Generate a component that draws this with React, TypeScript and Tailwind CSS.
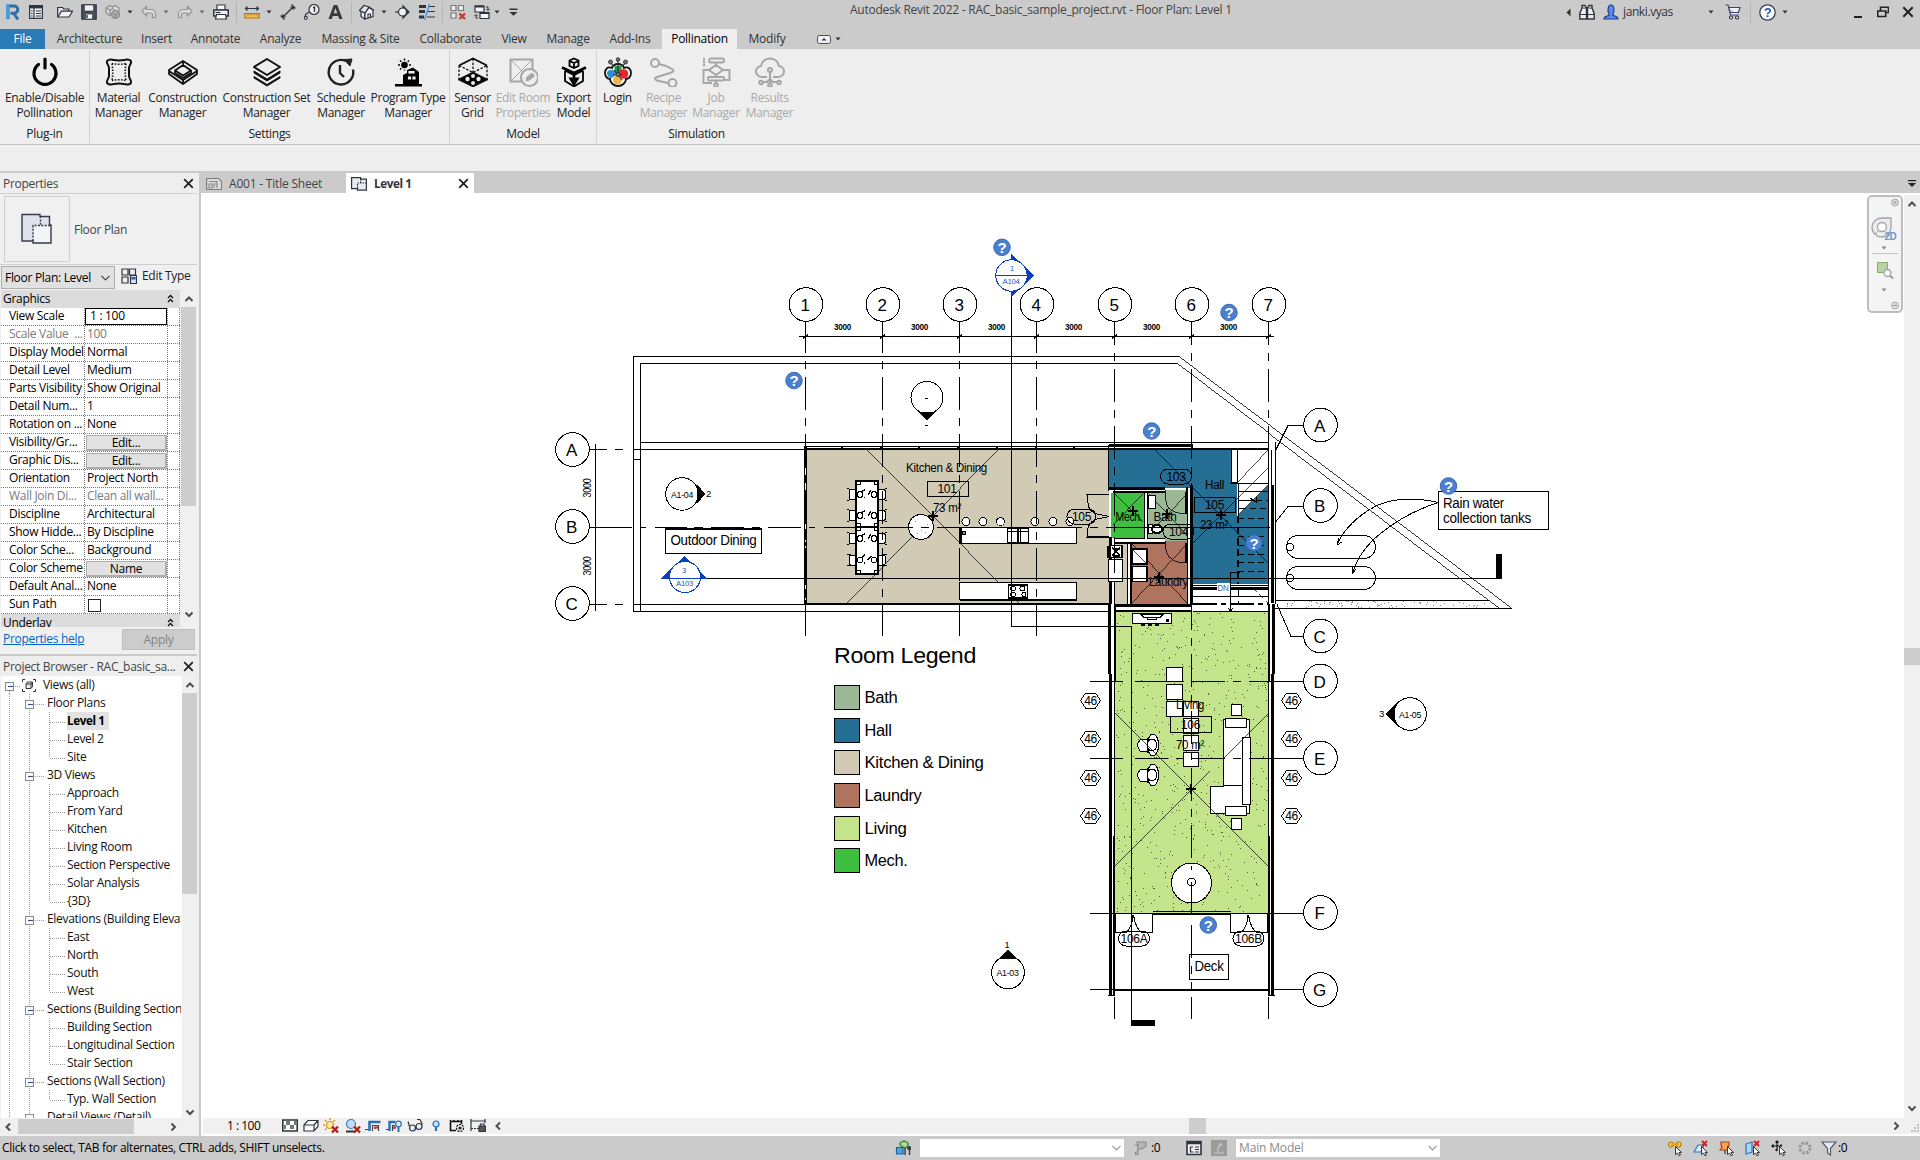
import React from "react";

const INK = "#2e3440";

/* ---------- small icon helpers ---------- */

function Icon({ children, size = 16, className = "", box = 16 }: { children?: React.ReactNode; size?: number; className?: string; box?: number }) {
  return (
    <svg width={size} height={size} viewBox={`0 0 ${box} ${box}`} fill="none" stroke={INK} strokeWidth="1.2" className={`shrink-0 ${className}`}>
      {children}
    </svg>
  );
}

function Caret({ className = "" }: { className?: string }) {
  return (
    <svg width="6" height="4" viewBox="0 0 6 4" className={`shrink-0 ${className}`}>
      <path d="M0.5 0.5h5L3 3.6z" fill="#333" />
    </svg>
  );
}

function Chevron({ dir, className = "" }: { dir: "up" | "down" | "left" | "right"; className?: string }) {
  const d = { up: "M1.5 7 5 3.5 8.5 7", down: "M1.5 3.5 5 7 8.5 3.5", left: "M7 1.5 3.5 5 7 8.5", right: "M3.5 1.5 7 5 3.5 8.5" }[dir];
  return (
    <svg width="10" height="10" viewBox="0 0 10 10" className={`shrink-0 ${className}`}>
      <path d={d} fill="none" stroke="#4d4d4d" strokeWidth="2" />
    </svg>
  );
}

function Cross({ size = 11, className = "" }: { size?: number; className?: string }) {
  return (
    <svg width={size} height={size} viewBox="0 0 11 11" className={`shrink-0 ${className}`}>
      <path d="M1.2 1.2l8.6 8.6M9.8 1.2l-8.6 8.6" stroke="#222" strokeWidth="1.8" />
    </svg>
  );
}

const Divider = ({ className = "" }: { className?: string }) => <div className={`h-[21px] w-px shrink-0 bg-[#b4b4b4] ${className}`} />;

const PlanIcon = ({ className = "" }: { className?: string }) => (
  <Icon className={className}>
    <path d="M0.6 1.6h9v1.5h5.8v11H6.5v-1.500H0.600z" fill="#e8ebf0" />
    <path d="M6.500 12V7h8.500M9.600 3v4" strokeDasharray="1.500 1" />
  </Icon>
);

/* ---------- title bar ---------- */

function QuickAccess() {
  return (
    <div className="flex h-full items-center pb-[5px]">
      <Icon className="ml-[5px]">
        <path d="M3 15V2h6.2a3.600 3.600 0 0 1 0 7.200H5.500M8.500 9l4.500 6.500" stroke="#2f6ea6" strokeWidth="3" />
        <path d="M1 0.500h3.500v14H1z" fill="#4b9cd6" stroke="none" />
      </Icon>
      <Icon className="ml-[7px]">
        <path d="M1.600 1.600h12.800v12.800H1.600z" fill="#eef0f3" />
        <path d="M1.600 3.200h12.800" strokeWidth="2.400" />
        <path d="M6 4v10M3 7h1.600M3 9.500h1.600M3 12h1.600M8 7h5M8 9.500h5M8 12h5" />
      </Icon>
      <Icon className="ml-[13px]">
        <path d="M0.700 13V3.500h5l1 1.500h5v2" fill="#dfe2e6" />
        <path d="M0.900 13 4.500 7.200h11L12 13z" fill="#f2f3f5" />
      </Icon>
      <Icon className="ml-2">
        <path d="M0.800 0.800h14.400v14.400H0.800z" fill="#4a5160" />
        <path d="M3.500 1h9v6h-9z" fill="#eef0f3" strokeWidth="0.600" />
        <path d="M4.500 10h7v5h-7z" fill="#f5f6f7" strokeWidth="0.600" />
        <path d="M6 11v3" strokeWidth="1.500" />
      </Icon>
      <Icon className="ml-2">
        <g stroke="#8d8d8d" fill="#d8d8d8">
          <path d="M1 4l4-2.500 4 2.500v5L5 11.500 1 9z" />
          <path d="M1 4l4 2 4-2M5 6v5" />
          <path d="M7 3.500l3-2 4 2.500v4" />
          <circle cx="10.500" cy="10.500" r="4" fill="#aaa" />
          <path d="M8 9l3 1.500 2-2M10.500 10.500V14" />
        </g>
      </Icon>
      <Caret className="ml-1.5" />
      <Icon className="ml-2">
        <path d="M1 7 5.500 2.500v3H10a4.500 4.500 0 0 1 4.500 4.500v3.500h-3V10.500A1.500 1.500 0 0 0 10 9H5.500v3z" stroke="#949494" fill="#dcdcdc" />
      </Icon>
      <Caret className="ml-1.5 opacity-60" />
      <Icon className="ml-2">
        <path d="M15 7l-4.500-4.500v3H6A4.500 4.500 0 0 0 1.500 10v3.500h3V10.500A1.500 1.500 0 0 1 6 9h4.500v3z" stroke="#949494" fill="#dcdcdc" />
      </Icon>
      <Caret className="ml-1.5 opacity-60" />
      <Icon className="ml-2">
        <path d="M4 1h8v5H4z" fill="#fff" />
        <path d="M0.800 6h14.400v6H0.800z" fill="#f0f2f5" strokeWidth="1.500" />
        <path d="M3.500 10.500h9l1 4.500h-11z" fill="#fff" />
        <path d="M2.500 8.500h5" />
      </Icon>
      <Divider className="ml-[7px]" />
      <Icon className="ml-[7px]">
        <path d="M1 4.500h14M3.500 2.500l-2 2 2 2M12.500 2.500l2 2-2 2" />
        <path d="M0.800 9.500h14.400v4.500H0.800z" fill="#f0bd52" stroke="#b27a10" />
        <path d="M4 9.500v2M7 9.500v2M10 9.500v2M13 9.500v2" stroke="#8a5c07" strokeWidth="0.800" />
      </Icon>
      <Caret className="ml-1.5" />
      <Icon className="ml-2">
        <path d="M4 12 12 4" strokeWidth="1.400" />
        <path d="M10.500 3h2.800v2.800M2.700 10.200V13h2.800" fill={INK} />
        <path d="M11.500 0.500l4 4M0.500 11.500l4 4" strokeWidth="1.200" />
      </Icon>
      <Icon className="ml-2">
        <path d="M1.500 13v-2.500L6 7.500" />
        <circle cx="10" cy="5.500" r="5" fill="#eee" />
        <path d="M9 4l1.500-1v5" strokeWidth="1.300" />
        <circle cx="1.800" cy="13.800" r="1.500" fill="#fff" />
      </Icon>
      <Icon className="ml-2">
        <path d="M0.500 15 5.700 1h3.600l5.200 14h-3.300l-1-3H4.800l-1 3zM5.700 9.300h3.600L7.500 4z" fill="#3a3a3a" stroke="none" />
      </Icon>
      <Divider className="ml-[7px]" />
      <Icon className="ml-[7px]">
        <path d="M2 6.500 6 9v6l-4-2.500z" fill="#e8ebef" />
        <path d="M6 9l4-5.500L14 6v6.500L6 15z" fill="#f4f5f7" />
        <path d="M0.500 6.500 5 1.500l5 1.500-4 6z" fill="#dfe2e8" />
        <path d="M10 3l5 3.500M9 14v-4h2.500v3.300" />
      </Icon>
      <Caret className="ml-1.5" />
      <Icon className="ml-2">
        <path d="M8 1.500v13M8 2l6 6-6 6z" fill={INK} />
        <circle cx="7.500" cy="8" r="4" fill="#f0f0f0" />
        <path d="M0 8h3.500" />
      </Icon>
      <Icon className="ml-2">
        <path d="M0 2.500h7M0 7.500h6M0 13h5" strokeWidth="3" />
        <path d="M10 2.500h6M9 7.500h7M8 13h8" />
        <path d="M10.500 0 5.500 16" stroke="#2f96ee" strokeWidth="1.300" />
      </Icon>
      <Divider className="ml-[7px]" />
      <Icon className="ml-[7px]">
        <path d="M1 1.500h5v5H1zM8.500 1.500h5v5h-5zM1 9h5v5H1z" fill="#eee" stroke="#777" />
        <path d="M9.500 9.500l5.500 5.500M15 9.500L9.500 15" stroke="#d5312a" strokeWidth="2.200" />
      </Icon>
      <Icon className="ml-2">
        <path d="M1 2h9v6H1zM6 8.500h9v6H6z" fill="#f2f3f5" />
        <path d="M1 2.500h9M6 9h9" strokeWidth="2" />
        <path d="M12 3h2v3M12.500 5 14 6.500 15.500 5M4 14H2v-3M0.500 12 2 10.500 3.500 12" strokeWidth="1" />
      </Icon>
      <Caret className="ml-1" />
      <svg width="9" height="8" viewBox="0 0 9 8" className="ml-[9px] shrink-0">
        <path d="M0.500 0.500h8v1.500h-8zM0.500 4h8l-4 3.800z" fill="#333" />
      </svg>
    </div>
  );
}

function TitleBar() {
  return (
    <div className="flex h-[29px] bg-[#cbcbcb]">
      <div className="w-[850px] shrink-0">
        <QuickAccess />
      </div>
      <div className="w-[718px] shrink-0 pt-[1px] text-[12px] leading-[18px] tracking-[-0.250px] text-[#444]">
        Autodesk Revit 2022 - RAC_basic_sample_project.rvt - Floor Plan: Level 1
      </div>
      <div className="flex flex-1 items-center pb-[5px]">
        <svg width="5" height="9" viewBox="0 0 5 9" className="-ml-[2px]">
          <path d="M4.500 0.500v8L0.500 4.500z" fill="#333" />
        </svg>
        <Icon className="ml-2">
          <path d="M0.800 15V9.500L3 4V1.500h3L7.500 4v11h-6zM15.200 15V9.500L13 4V1.500h-3L8.500 4v11h6z" fill="#efefef" strokeWidth="1.400" />
          <path d="M1 10.500h6M9 10.500h6M7 6h2M3 4h4M9 4h4" />
        </Icon>
        <Icon className="ml-2">
          <path d="M1 15c0-2.500 3-3 5-3.500v-2C4.500 8 4.500 1 8 1s3.500 7 2 8.500v2c2 .5 5 1 5 3.500z" fill="#5b8def" stroke="#1d3c8c" />
        </Icon>
        <span className="ml-1 w-[86px] text-[12px] leading-4 tracking-[-0.400px] text-[#333]">janki.vyas</span>
        <Caret className="ml-[-1px]" />
        <Icon className="ml-[11px]">
          <path d="M0.500 1h2.500l2.500 10h8M3.500 3.500h11.500L13.500 8.500H5" stroke="#34456e" fill="#f3f4f7" />
          <circle cx="6" cy="13.500" r="1.500" fill="#fff" />
          <circle cx="12" cy="13.500" r="1.500" fill="#fff" />
        </Icon>
        <Divider className="ml-[9px]" />
        <svg width="17" height="17" viewBox="0 0 17 17" className="ml-[8px] shrink-0">
          <circle cx="8.500" cy="8.500" r="7.700" fill="#fff" stroke="#333d55" strokeWidth="1.300" />
          <text x="8.500" y="13" textAnchor="middle" fontSize="13" fontWeight="bold" fill="#1f55c0" className="font-['Liberation_Sans',sans-serif]">?</text>
        </svg>
        <Caret className="ml-[6px]" />
        <div className="mt-[9px] ml-[66px] h-[2px] w-[8px] bg-[#222]" />
        <svg width="12" height="12" viewBox="0 0 12 12" className="ml-[15px]">
          <path d="M3.500 4.500V1.200h8v5.300H8.500M0.700 5h8v5.500h-8z" fill="none" stroke="#222" strokeWidth="1.600" />
        </svg>
        <Cross size={12} className="ml-[13px]" />
      </div>
    </div>
  );
}

/* ---------- ribbon ---------- */

const TABS: [string, string][] = [
  ["Architecture", "ml-[2px] w-[85px]"],
  ["Insert", "w-[49px]"],
  ["Annotate", "w-[69px]"],
  ["Analyze", "w-[61px]"],
  ["Massing & Site", "w-[99px]"],
  ["Collaborate", "w-[81px]"],
  ["View", "w-[46px]"],
  ["Manage", "w-[62px]"],
  ["Add-Ins", "w-[62px]"],
  ["Pollination", "ml-px w-[75px] bg-[#eeeeee] text-black"],
  ["Modify", "ml-[1px] w-[58px]"],
];

function RibbonTabs() {
  return (
    <div className="flex h-5 bg-[#cbcbcb] text-center text-[12px] leading-[20px] tracking-[-0.250px] text-[#333]">
      <div className="w-[45px] bg-[#2a7ab5] text-white">File</div>
      {TABS.map(([name, cls]) => (
        <div key={name} className={`shrink-0 whitespace-nowrap ${cls}`}>{name}</div>
      ))}
      <div className="flex items-center pl-[21px]">
        <svg width="14" height="9" viewBox="0 0 14 9">
          <rect x="0.500" y="0.500" width="13" height="8" rx="2" fill="#f1f1f1" stroke="#444c5e" />
          <path d="M4.500 5.500 7 3l2.500 2.500z" fill="#333" />
        </svg>
        <Caret className="ml-[4px]" />
      </div>
    </div>
  );
}

const GREY = "#a6a6a6";

const ribbonArt: Record<string, React.ReactNode> = {
  power: (
    <g stroke="#000" strokeWidth="3.200" strokeLinecap="round">
      <path d="M8.500 7.500a11 11 0 1 0 13 0" />
      <path d="M15 2v9" />
    </g>
  ),
  material: (
    <g stroke="#111" strokeWidth="2">
      <path d="M3 4c3-3 5-1 7-1 3 .5 7 .5 10 0 2 0 4-2 7 1 1 3-2 4-2 7v8c0 3 3 4 2 7-3 3-5 1-7 1-3-.5-7-.5-10 0-2 0-4 2-7-1-1-3 2-4 2-7v-8c0-3-3-4-2-7z" />
      <path d="M8 6.500c4 1 10 1 14 0M8 23.500c4-1 10-1 14 0M8 6.500c1 6 1 11 0 17M22 6.500c-1 6-1 11 0 17" strokeDasharray="1.500 1.500" strokeWidth="1.600" />
    </g>
  ),
  construction: (
    <g stroke="#111" strokeWidth="1.800" strokeLinejoin="round">
      <path d="M15 4 29 13v4L15 27 1 17v-4zM1 14l14 9 14-9" />
      <path d="M15 8 23 13.500 15 18.500 7 13.500zM7 13.500v2.500l8 5 8-5v-2.500M15 4v4M15 23v4" />
    </g>
  ),
  set: (
    <g stroke="#111" strokeWidth="2">
      <path d="M15 2 28 10 15 18 2 10z" strokeLinejoin="round" />
      <path d="M2 14l13 8 13-8v2l-13 8-13-8zM2 19.500l13 8 13-8v1.500L15 29 2 21z" fill="#111" strokeWidth="1" />
    </g>
  ),
  schedule: (
    <g stroke="#222" strokeWidth="2.400">
      <path d="M20 4a12.300 12.300 0 1 0 7 8.500" />
      <path d="M14 8v8l4 4" />
      <path d="M18 2.500l8-.5-2 7z" fill="#222" strokeWidth="1" />
    </g>
  ),
  program: (
    <g>
      <path d="M2 27h27v2.500H2zM10 27V18l4-2V13l6-2.500 6 4.500v12z" fill="#000" stroke="none" />
      <path d="M16 16.500v-2h5v2M15.500 20h2v2h-2zM20 20h2v2h-2z" fill="#eee" stroke="#eee" />
      <circle cx="11.500" cy="8" r="3.300" fill="#000" stroke="none" />
      <path d="M11.500 1.500v2M11.500 12.500v1M5 8h2M16 8h2M7 3.500l1.300 1.300M16 3.500l-1.300 1.300M7 12.500l1.300-1.300" stroke="#000" strokeWidth="1.500" />
    </g>
  ),
  sensor: (
    <g stroke="#111" strokeWidth="1.600">
      <path d="M15 1.500 29 8.500v14L15 29 1 22.500v-14zM15 16V2M1 8.500l14 7 14-7" strokeDasharray="2.500 1.500" strokeWidth="1.300" />
      <path d="M1 8.500l14-7 14 7" />
      <path d="M15 15.500 29 22.500 15 29.500 1 22.500z" fill="#000" />
      <g fill="#eee" stroke="none">
        <circle cx="15" cy="19" r="2" /><circle cx="9.500" cy="22" r="2.200" /><circle cx="20.500" cy="22" r="2.200" /><circle cx="15" cy="26" r="2" />
      </g>
    </g>
  ),
  room: (
    <g stroke={GREY} strokeWidth="2">
      <path d="M2.500 2.500h22v22h-22z" />
      <path d="M3 3l21 21M24 3 3 24" strokeWidth="1" />
      <circle cx="21.500" cy="20.500" r="8.500" fill="#eee" />
      <path d="M18 24l1-4 5-4 2.500 3-5 4z" fill={GREY} strokeWidth="1" />
    </g>
  ),
  exportModel: (
    <g stroke="#000" strokeWidth="1.800">
      <path d="M15 1.500l4.500 2v5.500L15 11l-4.500-2V3.500zM10.500 4l4.500 2 4.500-2M15 6v5" />
      <path d="M6 14v10l9 5.500L24 24V14" />
      <path d="M3 10.500l12 5.500 12-5.500M6 13l9 4.500V22M24 13l-9 4.500" strokeWidth="2.600" />
      <path d="M11 21.500h8L15 28z" fill="#000" />
    </g>
  ),
  login: (
    <g strokeWidth="1.800" stroke="#111">
      <path d="M9 11c-4-2-7 1-7 5s3 6 5 6c0 4 4 7 8 7s8-3 8-7c2 0 5-2 5-6s-3-7-7-5c0-2-3-4-6-4s-6 2-6 4z" fill="#fff" />
      <path d="M11.500 9h7v8h-7z" fill="#1a9a50" stroke="none" />
      <path d="M12 14v4l-3 3c-3 0-5-2-5-5s4-4 8-2z" fill="#2b8fd6" stroke="none" />
      <circle cx="20.500" cy="17" r="4.800" fill="#e8262b" stroke="none" />
      <circle cx="14.500" cy="23" r="4.500" fill="#f3b248" stroke="none" />
      <path d="M15 2v16M8 6l3 4M22 6l-3 4M10 18h9M15 18l-4-5M15 18l4 5" stroke="#333" strokeWidth="1.200" />
      <g fill="#777" stroke="#222" strokeWidth="0.800"><circle cx="7.500" cy="5" r="2" /><circle cx="22.500" cy="5" r="2" /><circle cx="15" cy="2.500" r="1.800" /><circle cx="15" cy="17.500" r="2" /></g>
    </g>
  ),
  recipe: (
    <g stroke={GREY} strokeWidth="2">
      <circle cx="6" cy="6" r="4" />
      <path d="M10 7c6 1 10 3 13 5s1 3-2 4L8 20c-3 1-2 3 0 3.500L19 26" />
      <circle cx="23.500" cy="26" r="4" />
    </g>
  ),
  job: (
    <g stroke={GREY} strokeWidth="1.900">
      <rect x="8" y="1.500" width="15" height="4" rx="2" />
      <path d="M15 6v2M15 8l7 5-7 5-7-5zM8 13H2.500v13H11M22 13h6.500v10H24M15 18v2" />
      <rect x="7" y="20" width="16" height="3.500" rx="1" />
      <path d="M15 23.500v3" /><circle cx="15" cy="28" r="1.800" />
      <path d="M2 2h2M2 5h2M2 8h2" strokeWidth="2.500" />
    </g>
  ),
  results: (
    <g stroke={GREY} strokeWidth="2">
      <path d="M12 20H7C3 20 1 17 1 14.500S3 9.500 6 9c1-5 5-7.500 9-7.500S23 4 24 9c3 .5 5 3 5 5.500S27 20 23 20h-5" />
      <circle cx="15" cy="13" r="2" />
      <path d="M15 15v11M7 25h5l3-3 3 3h5" />
      <circle cx="6" cy="25.500" r="1.800" /><circle cx="24" cy="25.500" r="1.800" /><circle cx="15" cy="28" r="1.800" />
    </g>
  ),
};

type Cmd = { art: string; lines: string[]; w: string; off?: boolean };
const GROUPS: { title: string; items: Cmd[] }[] = [
  { title: "Plug-in", items: [{ art: "power", lines: ["Enable/Disable", "Pollination"], w: "w-[89px]" }] },
  {
    title: "Settings",
    items: [
      { art: "material", lines: ["Material", "Manager"], w: "w-[57px]" },
      { art: "construction", lines: ["Construction", "Manager"], w: "w-[71px]" },
      { art: "set", lines: ["Construction Set", "Manager"], w: "w-[97px]" },
      { art: "schedule", lines: ["Schedule", "Manager"], w: "w-[52px]" },
      { art: "program", lines: ["Program Type", "Manager"], w: "w-[82px]" },
    ],
  },
  {
    title: "Model",
    items: [
      { art: "sensor", lines: ["Sensor", "Grid"], w: "w-[45px]" },
      { art: "room", lines: ["Edit Room", "Properties"], w: "w-[56px]", off: true },
      { art: "exportModel", lines: ["Export", "Model"], w: "w-[45px]" },
    ],
  },
  {
    title: "Simulation",
    items: [
      { art: "login", lines: ["Login", ""], w: "w-[41px]" },
      { art: "recipe", lines: ["Recipe", "Manager"], w: "w-[51px]", off: true },
      { art: "job", lines: ["Job", "Manager"], w: "w-[54px]", off: true },
      { art: "results", lines: ["Results", "Manager"], w: "w-[53px]", off: true },
    ],
  },
];

function Ribbon() {
  return (
    <div className="flex h-[96px] border-b border-[#c2c2c2] bg-[#eeeeee] text-[12px] tracking-[-0.300px] text-[#222]">
      {GROUPS.map((g, gi) => (
        <div key={g.title} className="flex">
          <div>
            <div className="flex pt-2">
              {g.items.map((c) => (
                <div key={c.art} className={`flex shrink-0 flex-col items-center leading-[15px] whitespace-nowrap ${c.w} ${c.off ? "text-[#a9a9a9]" : ""}`}>
                  <Icon size={30} box={30} className="mb-[3px]">{ribbonArt[c.art]}</Icon>
                  {c.lines.map((l, i) => <span key={i} className="h-[15px]">{l}</span>)}
                </div>
              ))}
            </div>
            <div className="pt-[6px] text-center leading-4">{g.title}</div>
          </div>
          {gi < 3 && <div className="mt-px h-[93px] w-px bg-[#d2d2d2]" />}
        </div>
      ))}
    </div>
  );
}

/* ---------- properties palette ---------- */

type Prop = { k: string; v: string; kind?: "input" | "btn" | "check"; off?: boolean };
const PROPS: Prop[] = [
  { k: "View Scale", v: "1 : 100", kind: "input" },
  { k: "Scale Value  ...", v: "100", off: true },
  { k: "Display Model", v: "Normal" },
  { k: "Detail Level", v: "Medium" },
  { k: "Parts Visibility", v: "Show Original" },
  { k: "Detail Num...", v: "1" },
  { k: "Rotation on ...", v: "None" },
  { k: "Visibility/Gr...", v: "Edit...", kind: "btn" },
  { k: "Graphic Dis...", v: "Edit...", kind: "btn" },
  { k: "Orientation", v: "Project North" },
  { k: "Wall Join Di...", v: "Clean all wall...", off: true },
  { k: "Discipline", v: "Architectural" },
  { k: "Show Hidde...", v: "By Discipline" },
  { k: "Color Sche...", v: "Background" },
  { k: "Color Scheme", v: "Name", kind: "btn" },
  { k: "Default Anal...", v: "None" },
  { k: "Sun Path", v: "", kind: "check" },
];

function GroupHead({ name, className = "" }: { name: string; className?: string }) {
  return (
    <div className={`flex justify-between overflow-hidden bg-[#dcdcdc] pr-[6px] pl-[2px] leading-[17px] ${className}`}>
      <span>{name}</span>
      <svg width="7" height="9" viewBox="0 0 7 9" className="mt-[4px] shrink-0">
        <path d="M1 4 3.500 1.500 6 4M1 8 3.500 5.500 6 8" fill="none" stroke="#111" strokeWidth="1.300" />
      </svg>
    </div>
  );
}

function PropertyRow({ p }: { p: Prop }) {
  return (
    <div className={`flex h-[18px] border-b border-dotted border-[#777] whitespace-pre ${p.off ? "text-[#7a7a7a]" : "text-black"}`}>
      <div className="w-[83px] shrink-0 overflow-hidden pl-2 leading-4">{p.k}</div>
      <div className="w-[83px] shrink-0 overflow-hidden border-l border-dotted border-[#777]">
        {p.kind === "input" && <div className="h-[17px] border border-black pl-1 leading-[14px]">{p.v}</div>}
        {p.kind === "btn" && <div className="mt-px ml-[1px] h-4 border border-r-2 border-b-2 border-[#adadad] bg-[#e1e1e1] text-center leading-[14px]">{p.v}</div>}
        {p.kind === "check" && <div className="mt-[3px] ml-[3px] h-[13px] w-[13px] border border-[#222] bg-white" />}
        {!p.kind && <div className="pl-[2px] leading-4">{p.v}</div>}
      </div>
      <div className="w-[12px] border-l border-dotted border-[#777]" />
      <div className="w-px border-l border-dotted border-[#777]" />
    </div>
  );
}

function Properties() {
  return (
    <div className="h-[481px] bg-[#f0f0f0]">
      <div className="flex h-5 items-center justify-between bg-[#eeeeee] pt-px pr-[3px] pl-[3px] text-[#444]">
        <span>Properties</span>
        <Cross />
      </div>
      <div className="flex h-[72px] items-center border-y border-[#cfcfcf] pl-1">
        <div className="flex h-[66px] w-[66px] items-center justify-center border border-[#cfcfcf]">
          <svg width="32" height="32" viewBox="0 0 32 32">
            <path d="M1 1.500h18v2h9.500v8.500H30v18H12v-2H1z" fill="#dfe2ea" stroke="#363c49" strokeWidth="1.400" />
            <path d="M13 13h16v16H13z" fill="#f3f4f7" />
            <path d="M12 28V12.500h17M19.500 3v9" fill="none" stroke="#363c49" strokeWidth="1.400" strokeDasharray="2 1.400" />
          </svg>
        </div>
        <span className="ml-1 pt-[2px] text-[#444]">Floor Plan</span>
      </div>
      <div className="flex h-[25px] pt-px pl-px">
        <div className="flex h-[23px] w-[114px] items-center justify-between border border-[#adadad] bg-[#e1e1e1] pr-1 pl-[3px]">
          <span className="text-black">Floor Plan: Level</span>
          <svg width="9" height="6" viewBox="0 0 9 6"><path d="M0.500 0.800 4.500 4.800 8.500 0.800" fill="none" stroke="#444" strokeWidth="1.200" /></svg>
        </div>
        <Icon className="mt-[2px] ml-[6px]">
          <path d="M1 1h6v6H1zM8.500 1h6v6h-6zM1 9h6v6H1z" fill="#eceef2" />
          <path d="M9.500 7.500h6v8h-6z" fill="#dde6f5" />
          <path d="M11 9.500h3v1.500h-3z" fill="#2463b5" stroke="#2463b5" />
        </Icon>
        <span className="ml-[5px] leading-[19px] text-[#222]">Edit Type</span>
      </div>
      <div className="flex h-[337px] pl-px">
        <div className="w-[179px] overflow-hidden bg-white">
          <GroupHead name="Graphics" className="h-[18px]" />
          {PROPS.map((p) => <PropertyRow key={p.k} p={p} />)}
          <GroupHead name="Underlay" className="h-[13px]" />
        </div>
        <div className="ml-px flex w-[15px] flex-col items-center justify-between bg-[#f0f0f0] pb-[8px]">
          <div className="flex h-[17px] items-center"><Chevron dir="up" /></div>
          <div className="-mt-[104px] h-[199px] w-full bg-[#cdcdcd]" />
          <Chevron dir="down" />
        </div>
      </div>
      <div className="flex justify-between pt-[2px] pr-[2px] pl-[3px]">
        <span className="leading-[19px] text-[#0066cc] underline">Properties help</span>
        <div className="h-[21px] w-[73px] border border-[#bfbfbf] bg-[#cccccc] text-center leading-[19px] text-[#838383]">Apply</div>
      </div>
    </div>
  );
}

/* ---------- project browser ---------- */

const TREE: { t: string; d: 0 | 1 | 2; last?: boolean }[] = [
  { t: "Views (all)", d: 0 },
  { t: "Floor Plans", d: 1 },
  { t: "Level 1", d: 2 },
  { t: "Level 2", d: 2 },
  { t: "Site", d: 2, last: true },
  { t: "3D Views", d: 1 },
  { t: "Approach", d: 2 },
  { t: "From Yard", d: 2 },
  { t: "Kitchen", d: 2 },
  { t: "Living Room", d: 2 },
  { t: "Section Perspective", d: 2 },
  { t: "Solar Analysis", d: 2 },
  { t: "{3D}", d: 2, last: true },
  { t: "Elevations (Building Elevation)", d: 1 },
  { t: "East", d: 2 },
  { t: "North", d: 2 },
  { t: "South", d: 2 },
  { t: "West", d: 2, last: true },
  { t: "Sections (Building Section)", d: 1 },
  { t: "Building Section", d: 2 },
  { t: "Longitudinal Section", d: 2 },
  { t: "Stair Section", d: 2, last: true },
  { t: "Sections (Wall Section)", d: 1 },
  { t: "Typ. Wall Section", d: 2, last: true },
  { t: "Detail Views (Detail)", d: 1 },
];

function TreeLines({ d, first, last }: { d: 0 | 1 | 2; first: boolean; last?: boolean }) {
  const w = [42, 46, 66][d];
  const box = (x: number) => (
    <g>
      <rect x={x - 4} y="6.500" width="8" height="8" rx="1" fill="#fafafa" stroke="#8a8a8a" />
      <path d={`M${x - 2} 10.500h5`} stroke="#2d4a9a" />
    </g>
  );
  return (
    <svg width={w} height="18" viewBox={`0 0 ${w} 18`} className="shrink-0" fill="none" shapeRendering="crispEdges">
      <g stroke="#9a9a9a" strokeDasharray="1 1">
        {first ? <path d="M8.500 15v3" /> : <path d="M8.500 0v18" />}
        {d >= 1 && <path d="M28.500 0v18" />}
        {d === 2 && <path d={`M48.500 0v${last ? 10 : 18}`} />}
        {d === 0 && <path d="M14 10.500h6" />}
        {d === 1 && <path d="M34 10.500h10" />}
        {d === 2 && <path d="M49 10.500h15" />}
      </g>
      {d === 0 && box(8.5)}
      {d === 1 && box(28.5)}
      {d === 0 && (
        <g stroke="#333" shapeRendering="auto">
          <path d="M24 3.500h-2.500V6M32 3.500h2.500V6M24 15.500h-2.500V13M32 15.500h2.500V13" />
          <path d="M25 8l1.500-2h5v4.500L30 12.500h-5zM25 8h5v4M30 8l1.500-2" fill="#eee" />
        </g>
      )}
    </svg>
  );
}

function ProjectBrowser() {
  return (
    <div className="h-[480px] bg-[#f0f0f0]">
      <div className="flex h-5 items-center justify-between bg-[#eeeeee] pt-px pr-[3px] pl-[3px] text-[#444]">
        <span>Project Browser - RAC_basic_sa...</span>
        <Cross />
      </div>
      <div className="flex h-[443px] pl-px">
        <div className="h-[442px] w-[181px] overflow-hidden bg-white">
          {TREE.map((n, i) => (
            <div key={n.t} className="flex h-[18px] w-[180px] overflow-hidden leading-[17px] whitespace-nowrap text-[#111]">
              <TreeLines d={n.d} first={i === 0} last={n.last} />
              {i === 2 ? <span className="bg-[#e2e2e2] pr-1 text-[11.700px] font-bold tracking-[-0.400px] text-black">{n.t}</span> : <span>{n.t}</span>}
            </div>
          ))}
        </div>
        <div className="flex w-[15px] flex-col items-center bg-[#f0f0f0]">
          <div className="flex h-[17px] items-center"><Chevron dir="up" /></div>
          <div className="h-[201px] w-full bg-[#cdcdcd]" />
          <Chevron dir="down" className="mt-[213px]" />
        </div>
      </div>
      <div className="flex h-[15px] items-center pl-[3px]">
        <Chevron dir="left" />
        <div className="ml-[5px] h-full w-[116px] bg-[#cdcdcd]" />
        <Chevron dir="right" className="ml-[34px]" />
      </div>
    </div>
  );
}

/* ---------- floor plan drawing ---------- */

const ARIAL = "font-['Liberation_Sans',Arial,sans-serif]";
const DASH = "33 8 8 8";
const HAIR = 0.7;

function Label({ x, y, size, w, children, fill = "#000", anchor = "middle", rotate, bold }: { x: number; y: number; size: number; w?: number; children: string; fill?: string; anchor?: "start" | "middle"; rotate?: number; bold?: boolean }) {
  return (
    <text x={x} y={y + size * 0.36} fontSize={size} fontWeight={bold ? 700 : 400} textAnchor={anchor} fill={fill} stroke="none" textLength={w} lengthAdjust="spacingAndGlyphs" transform={rotate ? `rotate(${rotate} ${x} ${y})` : undefined} className={ARIAL}>
      {children}
    </text>
  );
}

function Bubble({ x, y, t }: { x: number; y: number; t: string }) {
  return (
    <g>
      <circle cx={x} cy={y} r="16.800" fill="#fff" />
      <Label x={x - 1} y={y + 0.5} size={17}>{t}</Label>
    </g>
  );
}

function Help({ x, y }: { x: number; y: number }) {
  return (
    <g shapeRendering="auto">
      <circle cx={x} cy={y} r="8.300" fill="#4a80cf" stroke="#2c5ba3" strokeWidth="0.800" />
      <text x={x} y={y + 5.5} fontSize="15" fontWeight="bold" fill="#fff" stroke="none" textAnchor="middle" className={ARIAL}>?</text>
    </g>
  );
}

function Plus({ x, y }: { x: number; y: number }) {
  return <path d={`M${x - 5} ${y}h10M${x} ${y - 5}v10`} strokeWidth="2" />;
}

function Pill({ x, y, w, t }: { x: number; y: number; w: number; t: string }) {
  return (
    <g>
      <rect x={x - w / 2} y={y - 7.5} width={w} height="15" rx="7.500" fill="none" />
      <Label x={x} y={y} size={12}>{t}</Label>
    </g>
  );
}

function scatter(n: number, x0: number, y0: number, w: number, h: number, seed: number) {
  let s = seed;
  const next = () => {
    s = (s * 1664525 + 1013904223) % 4294967296;
    return s / 4294967296;
  };
  return Array.from({ length: n }, () => `M${Math.floor(x0 + next() * w)} ${Math.floor(y0 + next() * h) + 0.5}h1`).join("");
}

const LIVING_DOTS = scatter(640, 1116, 613, 152, 299, 7);
const STRIP_DOTS = scatter(80, 1280, 601, 205, 7, 21);
const COLS = [805.5, 882.5, 959.5, 1036.5, 1114.5, 1191.5, 1268.5];

const LEGEND: [string, string, number, number][] = [
  ["Bath", "#9bb796", 698, 33],
  ["Hall", "#256f94", 730.5, 27],
  ["Kitchen & Dining", "#d1cab5", 763, 119],
  ["Laundry", "#ae7460", 796, 57],
  ["Living", "#c3e48b", 828.5, 42],
  ["Mech.", "#3fbf3f", 861, 43],
];

function SiteAndGrids() {
  return (
    <g>
      <path d="M633.500 611.500V356.500H1179M1512 608.500H1275M640.500 611.500V363.500H1176.500M633.500 611.500H1109M633.500 459.500h7M640.500 442.500H1268M1275 600.500H1489" />
      <path d="M1179 356.500 1512 608.500M1176.500 363.500 1499.500 608.500" strokeWidth="0.800" />
      <path d="M632.500 449.500H806M632.500 604.500H806" />
      <path d="M589.500 449.500h17M615 449.500h8M589.500 604.500h17M615 604.500h8M589.500 527.500H632" />
      <path d={STRIP_DOTS} stroke="#888" />
      <path d="M595.500 444V611M799 336.500H1274" />
    </g>
  );
}

function Kitchen() {
  return (
    <g>
      <rect x="805" y="449" width="305" height="155" fill="#d1cab5" stroke="none" />
      <path d="M805 446.500h304" />
      <path d="M805 449h304M804 604h308" strokeWidth="2" />
      <path d="M805.500 446V605" strokeWidth="3" />
      <path d="M805.500 455V600" stroke="#fff" strokeDasharray="9 4" />
      <path d="M841.500 446v3M880.500 446v3M918.500 446v3M957.500 446v3M996.500 446v3M1035.500 446v3M1073.500 446v3" strokeWidth="2" />
      <path d="M866.500 449l153.500 155M999 449 846 604" strokeWidth={HAIR} />
      {[494.5, 515.5, 538.5, 560].map((y) => (
        <g key={y} fill="#fff">
          <path d={`M856 ${y - 5}h-5l-2 1v8l2 1h5z`} />
          <path d={`M878 ${y - 5}h5l2 1v8l-2 1h-5z`} />
          <path d={`M847 ${y - 6}l4 1M847 ${y + 6}l4-1M887 ${y - 6}l-4 1M887 ${y + 6}l-4-1`} />
        </g>
      ))}
      <rect x="856" y="481" width="22" height="93" fill="#fff" strokeWidth="2" />
      <path d="M855 527h24" strokeWidth="2" />
      <path d="M857 484.500h3v-3M877 484.500h-3v-3M857 523.500h3v3M877 523.500h-3v3M857 530.500h3v-3M877 530.500h-3v-3M857 570.500h3v3M877 570.500h-3v3" />
      {[494.5, 515.5, 538.5, 560].map((y) => (
        <g key={y}>
          <circle cx="860" cy={y} r="2.800" />
          <circle cx="874" cy={y} r="2.800" />
          <path d={`M862 ${y - 3}l3-2M871 ${y - 4}l-3 4M864 ${y + 3}h1`} strokeWidth="1.500" />
        </g>
      ))}
      <circle cx="921" cy="527" r="12.500" fill="#fff" />
      <path d="M915 521.500h1M925 532.500h1M917 533.500h1M921 530.500h1M927 524.500h1" stroke="#999" />
      <Plus x={933} y={516} />
      {[966, 983, 1000.5, 1035, 1053, 1070].map((x) => <circle key={x} cx={x} cy="521.500" r="4" fill="#fff" />)}
      <rect x="959.500" y="527.500" width="117" height="16" fill="#fff" />
      <path d="M960.500 527v17" strokeWidth="2" />
      <rect x="962" y="531" width="3.500" height="3.500" fill="#888" />
      <path d="M1007.500 528.500h21v14h-21zM1018 528v15M1020.500 528v15M1008 531.500h20" strokeWidth="1.500" />
      <rect x="959.500" y="582.500" width="117" height="17" fill="#fff" />
      <path d="M960 599.500h117" strokeWidth="2" />
      <rect x="1008.500" y="585" width="19" height="13" strokeWidth="1.500" fill="#fff" />
      <g strokeWidth="1"><circle cx="1013" cy="588.500" r="2.500" /><circle cx="1022.500" cy="588.500" r="2.500" /><circle cx="1013" cy="594.500" r="2.500" /><circle cx="1024" cy="594.500" r="2" /></g>
      <rect x="927.500" y="481.500" width="41" height="15" />
      <Label x={946.5} y={468} size={12} w={81}>Kitchen &amp; Dining</Label>
      <Label x={947} y={488.5} size={12}>101</Label>
      <Label x={947} y={508} size={12} w={28}>73 m²</Label>
      <path d="M1109 494.500h-22q1 10 2 13t6 6l14 3-14 3q-4 2-6 6t-2 12h22" />
      <path d="M1087 494.500h22M1087 537h25" strokeWidth="1.800" />
      <Pill x={1081.5} y={516.5} w={29} t="105" />
    </g>
  );
}

function ServiceCore() {
  return (
    <g>
      <path d="M1109 450H1268V584H1192V488H1109z" fill="#256f94" stroke="none" />
      <rect x="1109" y="488" width="83" height="123" fill="#fff" stroke="none" />
      <rect x="1111" y="492.500" width="33" height="45" fill="#3fbf3f" stroke="none" />
      <path d="M1148 492.500h17v-3h22.500v51.500h-22.500v-3h-17z" fill="#9bb796" stroke="none" />
      <path d="M1131 544h34v-3h22.500v63H1131z" fill="#ae7460" stroke="none" />
      <rect x="1114.500" y="543.500" width="12" height="61" fill="#d1cab5" stroke="none" />
      <path d="M1109 445h82" strokeWidth="3" />
      <path d="M1109 449h160M1191.500 444v6" strokeWidth="2" />
      <path d="M1108.500 445v46" />
      <path d="M1109 488.500h56" strokeWidth="3" />
      <path d="M1113 492h52M1144.500 492v46M1147.500 492v46M1114 538.500h31M1147 538.500h18M1114 543h51" strokeWidth="1.400" />
      <path d="M1191.500 485v120M1187 487v7" strokeWidth="2.500" />
      <path d="M1187.500 494v110" />
      <path d="M1127.500 543v61M1131 543v61" strokeWidth="1.600" />
      <path d="M1110 537v75" strokeWidth="3" />
      <path d="M1114.500 537v75M1109 604.500h83" strokeWidth="1.500" />
      <path d="M1114 606h78M1114 611h78" strokeWidth="2" />
      <path d="M1115 494l28 28M1143 494l-30 31M1149 494l37 40M1187 494l-38 40M1132 544l55 59M1187 544l-55 59" strokeWidth={HAIR} />
      <path d="M1165 490q0 18 6 20 4 3 15 4V492M1165 541q0 15 7 18 4 4 14 4V543" strokeWidth="0.800" />
      <path d="M1185.500 492v22M1185.500 543v20" strokeWidth="2" />
      <rect x="1148.500" y="495.500" width="7" height="13" fill="#fff" />
      <rect x="1148.500" y="524.500" width="4" height="9" fill="#fff" />
      <ellipse cx="1157" cy="529" rx="5" ry="4" fill="#fff" strokeWidth="2" />
      <rect x="1132" y="549" width="15" height="15" fill="#fff" strokeWidth="1.500" />
      <rect x="1132" y="566.500" width="15" height="15" fill="#fff" strokeWidth="1.500" />
      <path d="M1132 549l15 15" strokeWidth={HAIR} />
      <rect x="1107" y="546" width="4" height="11" fill="#000" />
      <rect x="1110" y="545.500" width="12" height="12" fill="#fff" strokeWidth="1.500" />
      <path d="M1112 547l8 9M1120 547l-8 9M1113 556h7M1113 549h7" strokeWidth="1.300" />
      <rect x="1108.500" y="559.500" width="14" height="22" fill="#fff" />
      <Plus x={1132.5} y={511} />
      <Plus x={1167} y={514} />
      <Plus x={1158.5} y={577} />
      <Label x={1129} y={517} size={12} w={27}>Mech.</Label>
      <Label x={1165} y={517} size={12} w={23}>Bath</Label>
      <Label x={1168.5} y={581.5} size={12} w={39}>Laundry</Label>
      <Pill x={1176} y={476.5} w={31} t="103" />
      <Pill x={1178.5} y={531.5} w={31} t="104" />
      <rect x="1237" y="450" width="31" height="66" fill="#fff" stroke="none" />
      <path d="M1268 485v40h-30v-9.500z" fill="#256f94" stroke="none" />
      <rect x="1231.500" y="449.500" width="6" height="33" fill="#fff" />
      <path d="M1155 450l113 113M1193 543l75-75M1238 482l30-32M1238 515l30-30" strokeWidth={HAIR} />
      <path d="M1230 483.500h38M1238 491.500h30M1238 500.500h16M1238 508.500h8" />
      <path d="M1250 508.500h18M1238 518.500h30M1238 527.500h30M1238 536.500h30M1238 545.500h30M1238 554.500h30M1238 562.500h30M1238 571.500h30M1256 500.500h12" strokeDasharray="6 4" />
      <path d="M1238 483v33" />
      <path d="M1238 516v88" strokeDasharray="7 4" strokeWidth="1.500" />
      <path d="M1230.500 611v-39h9M1250 498l6 4v-5" />
      <rect x="1193" y="584" width="75" height="28" fill="#fff" stroke="none" />
      <path d="M1193 585.500h75M1193 596.500h75M1230.500 584v27M1228 608l2.500 3 2.500-3" />
      <path d="M1238 590v14" strokeDasharray="7 4" />
      <path d="M1193 588.500h75" strokeWidth="2.500" />
      <path d="M1193 604h75" strokeWidth="2" strokeDasharray="24 4 5 4" />
      <path d="M1253 588l15 15" strokeDasharray="5 4" strokeWidth={HAIR} />
      <rect x="1216.500" y="583" width="13" height="9" fill="#fff" stroke="none" />
      <Label x={1223} y={588} size={8.5} fill="#356a9c" w={11}>DN</Label>
      <rect x="1194.500" y="497.500" width="41" height="15" />
      <Label x={1214.5} y={484.5} size={12} w={19}>Hall</Label>
      <Label x={1214.5} y={504.5} size={12}>105</Label>
      <Label x={1214} y={524.5} size={12} w={28}>23 m²</Label>
      <Plus x={1220.5} y={515} />
      <rect x="1268" y="442" width="7.500" height="162" fill="#fff" stroke="none" />
      <path d="M1268.500 442v162M1271.500 450v36M1275.500 442v162" />
      <path d="M1272 485v118" strokeWidth="3" />
    </g>
  );
}

function Living() {
  return (
    <g>
      <rect x="1115" y="611.500" width="153.500" height="301.500" fill="#c3e48b" stroke="none" />
      <path d={LIVING_DOTS} stroke="#4c6338" />
      <path d="M1193 611.500h76" />
      <rect x="1108" y="604" width="6" height="391" fill="#fff" stroke="none" />
      <rect x="1269" y="604" width="6" height="391" fill="#fff" stroke="none" />
      <path d="M1109 604v70M1273.500 604v70" strokeWidth="3" />
      <path d="M1110.500 674v322M1272.500 674v322" strokeWidth="2.500" />
      <path d="M1114.500 604v392M1268.500 604v392M1108 995.500h7M1268 995.500h7" />
      <path d="M1113.500 836v160M1269 836v160M1114.500 604v77M1268.500 604v77" strokeWidth="2" />
      <path d="M1115 990h153" strokeWidth="2" />
      <rect x="1132.500" y="613.500" width="39" height="10" fill="#fff" strokeWidth="1.400" />
      <path d="M1141 614.500h22l-3 3h-16zM1147 617v2h9v-2" fill="#fff" />
      <path d="M1141 625h18" strokeWidth="1.500" strokeDasharray="4 3" />
      <path d="M1166 620h3" strokeWidth="3" />
      <g fill="#fff">
        <path d="M1166.500 667.500h16v14h-16zM1166.500 684.500h16v15h-16zM1166.500 701.500h16v15h-16zM1183.500 701.500h15v15h-15zM1183.500 718.500h15v15h-15zM1183.500 735.500h15v15h-15zM1183.500 752.500h15v14h-15z" />
        {[745, 775].map((y) => (
          <g key={y}>
            <path d={`M1137 ${y}l3-5 7-1v13l-7-1z`} />
            <ellipse cx="1153" cy={y} rx="5.500" ry="11" />
            <ellipse cx="1152" cy={y} rx="4.500" ry="6" />
          </g>
        ))}
        <path d="M1223.500 719.500h26v94h-39v-27h13z" />
        <path d="M1223.500 785.500h19M1242.500 737.500h8v67h-8zM1225.500 718.500h21v9h-21zM1225.500 806.500h21v9h-21zM1231.500 704.500h10v11h-10zM1231.500 818.500h10v11h-10z" />
        <circle cx="1191.500" cy="883" r="20" />
        <circle cx="1191.500" cy="882" r="4" />
      </g>
      <path d="M1115 713l153.500 153M1268.500 712.500l-45 45M1210 771L1115 866" strokeWidth={HAIR} />
      <Plus x={1191} y={789} />
      <rect x="1170.500" y="716.500" width="41" height="16" />
      <Label x={1190} y={704.5} size={12} w={28}>Living</Label>
      <Label x={1190.5} y={724.5} size={12}>106</Label>
      <Label x={1190} y={744.5} size={12} w={28}>70 m²</Label>
      <path d="M1152.500 911.500h78" />
      <path d="M1152 914h79" strokeWidth="2" />
      <path d="M1115.500 914v18.500h11M1143 932.500h9.500V914M1230.500 914v18.500h9M1257 932.500h10.500V914M1133 915q-1 14-8 18M1133.500 915q2 14 9 18M1248 915q-1 14-8 18M1248.500 915q2 14 9 18" />
      <Pill x={1134} y={938.5} w={31} t="106A" />
      <Pill x={1248.5} y={938.5} w={31} t="106B" />
      <rect x="1189.500" y="954.500" width="39" height="25" fill="#fff" />
      <Label x={1209} y={965.5} size={14} w={29}>Deck</Label>
    </g>
  );
}

function GridLines() {
  return (
    <g>
      {COLS.map((x, i) => (
        <g key={x}>
          {i < 4 && <path d={`M${x} 320V636`} strokeDasharray={DASH} />}
          {i === 4 && <path d={`M${x} 312V605M${x} 997v22`} strokeDasharray={DASH} />}
          {i === 5 && <path d={`M${x} 312V870M${x} 882v31M${x} 925V989M${x} 997v22`} strokeDasharray={DASH} />}
          {i === 6 && <path d={`M${x} 312V445M${x} 997v22`} strokeDasharray={DASH} />}
          <path d={`M${x - 2.5} 338.500l5-4`} />
          <Bubble x={x + 0.5} y={304.5} t={String(i + 1)} />
          {i < 6 && <Label x={x + 37} y={327} size={8.5} w={17} bold>3000</Label>}
        </g>
      ))}
      <path d="M640 527.500H1114" strokeDasharray="6 9 32 7 9 8 33 8 8 8 33 8" />
      <path d="M1115 527.500H1270" />
      <path d="M1090 681.500h37M1135 681.500h160M1090 758.500h37M1135 758.500h120" strokeDasharray={DASH} />
      <path d="M1274 681.500h30M1250 758.500h54M1090 913.500h214M1090 989.500h24M1274 989.500h30" />
      <path d="M1304 425.500h-16l-12 24M1304 506.500h-16l-12 15M1304 636.500h-13l-14-32" />
      {([["A", 449.5], ["B", 526.5], ["C", 603.5]] as [string, number][]).map(([t, y]) => <Bubble key={t} x={572.5} y={y} t={t} />)}
      {([["A", 425], ["B", 505.5], ["C", 636], ["D", 681], ["E", 758], ["F", 912.5], ["G", 989.5]] as [string, number][]).map(([t, y]) => <Bubble key={t} x={1320.5} y={y} t={t} />)}
      <Label x={587} y={488} size={10} w={19} rotate={-90}>3000</Label>
      <Label x={587} y={566} size={10} w={19} rotate={-90}>3000</Label>
      {[700.5, 739, 778, 816].map((y) =>
        [1090.5, 1291.5].map((x) => (
          <g key={`${x}-${y}`}>
            <path d={`M${x - 10} ${y}l5-7.500h10l5 7.500-5 7.500h-10z`} fill="#fff" />
            <Label x={x} y={y} size={12}>46</Label>
          </g>
        ))
      )}
    </g>
  );
}

function Annotations() {
  return (
    <g>
      <path d="M1011.500 297V626.500H1131.500V1021M706 578.500H1498" />
      <path d="M1131 1020h24v6h-24zM1496 554h6v25h-6z" fill="#000" stroke="none" />
      <g stroke="#0a3fc0" fill="#0a3fc0">
        <path d="M1011.500 254.500l21.500 21-21.500 21z" />
        <circle cx="1011.500" cy="275.500" r="15.700" fill="#fff" />
        <path d="M996 275.500h37" />
        <path d="M662 578.500l22.500-22 22 22z" />
        <circle cx="685" cy="577" r="15.500" fill="#fff" />
        <path d="M663 578.500h43" />
      </g>
      <Label x={1012} y={268} size={7.5} fill="#2a57c8">1</Label>
      <Label x={1011} y={281.5} size={8} w={17} fill="#2a57c8">A104</Label>
      <Label x={684} y={570.5} size={7.5} fill="#2a57c8">3</Label>
      <Label x={684.5} y={583.5} size={8} w={17} fill="#2a57c8">A103</Label>

      <path d="M693 482l11.500 12-11.500 12zM915 408l12 11.500 12-11.500zM1398 702l-12 12 12 12zM996 962l12-12 12 12z" fill="#000" />
      <circle cx="682" cy="494" r="16.300" fill="#fff" />
      <circle cx="927" cy="397.500" r="16" fill="#fff" />
      <circle cx="1410" cy="714" r="16.300" fill="#fff" />
      <circle cx="1008" cy="972.500" r="16.300" fill="#fff" />
      <path d="M697 485l7.500 9-7.500 9zM920 412.500h14l-7 7zM1394 706l-8 8 8 8zM1001 958h14l-7-8z" fill="#000" />
      <Label x={682} y={494.5} size={9.5} w={22}>A1-04</Label>
      <Label x={708.5} y={494} size={9.5}>2</Label>
      <path d="M925 398.500h3M925 425.500h3" />
      <Label x={1410} y={714.5} size={9.5} w={22}>A1-05</Label>
      <Label x={1381.5} y={714} size={9.5}>3</Label>
      <Label x={1007.5} y={973} size={9.5} w={22}>A1-03</Label>
      <Label x={1007} y={945} size={9.5}>1</Label>

      <rect x="665.500" y="528.500" width="96" height="25" fill="#fff" />
      <path d="M665 528.500h97" strokeWidth="2" />
      <Label x={713.5} y={539.5} size={14} w={86}>Outdoor Dining</Label>

      <rect x="1286.500" y="535.500" width="89" height="23" rx="11.500" />
      <rect x="1286.500" y="566.500" width="89" height="23" rx="11.500" />
      <circle cx="1290" cy="547" r="3.500" />
      <circle cx="1290" cy="578" r="3.500" />
      <path d="M1438.500 502.500q-45-10-72 9-22 15-29 33l1-6M1337 545l5-3M1438.500 502.500q-32 10-58 31-22 18-28 40v-7M1352 574l4-5" />
      <rect x="1438.500" y="491.500" width="110" height="38" fill="#fff" />
      <Label x={1443} y={502.5} size={14} w={61} anchor="start">Rain water</Label>
      <Label x={1443} y={517.5} size={14} w={88} anchor="start">collection tanks</Label>

      {([[1002, 247.3], [794, 380.5], [1229, 312.5], [1151.6, 431], [1254, 543], [1448.5, 486], [1208.3, 925]] as [number, number][]).map(([x, y]) => <Help key={x} x={x} y={y} />)}

      <Label x={834} y={655.5} size={22} w={142} anchor="start">Room Legend</Label>
      {LEGEND.map(([t, c, y, w]) => (
        <g key={t}>
          <rect x="834.500" y={Math.round(y) - 12.5} width="25" height="24" fill={c} />
          <Label x={864.5} y={y - 0.5} size={16} w={w} anchor="start">{t}</Label>
        </g>
      ))}
    </g>
  );
}

function FloorPlan() {
  return (
    <svg width="1702" height="925" viewBox="201 193 1702 925" fill="none" stroke="#000" strokeWidth="1" shapeRendering="crispEdges" className="block shrink-0">
      <SiteAndGrids />
      <Kitchen />
      <ServiceCore />
      <Living />
      <GridLines />
      <Annotations />
    </svg>
  );
}

/* ---------- view area ---------- */

function NavBar() {
  return (
    <div className="absolute top-[2px] right-[17px] flex h-[118px] w-9 flex-col items-center rounded-[5px] border-2 border-[#bdbdbd] bg-[#f4f4f4]">
      <svg width="32" height="114" viewBox="0 0 32 114" fill="none">
        <circle cx="26" cy="5.500" r="3.500" fill="#ddd" stroke="#aaa" />
        <path d="M24.500 4l3 3M27.500 4l-3 3" stroke="#999" />
        <path d="M13 21h9v10a9.500 9.500 0 1 1-9-10z" fill="#eaebed" stroke="#9fa3a8" strokeWidth="1.300" />
        <circle cx="13" cy="30" r="4.500" fill="#fff" stroke="#9fa3a8" strokeWidth="1.300" />
        <path d="M6 37l3.500-3.500" stroke="#9fa3a8" />
        <text x="15.500" y="42.500" fontSize="10" fontWeight="bold" fill="#6d98c8" className={ARIAL} textLength="12">2D</text>
        <path d="M12.500 49.500h5L15 52.500z" fill="#888" />
        <path d="M3 56.500h26" stroke="#c4c4c4" />
        <path d="M8.500 65.500h10v10h-10z" fill="#b9d3a4" stroke="#88ad70" />
        <circle cx="18.500" cy="76" r="3.500" fill="#f5f8fb" stroke="#a0a5aa" strokeWidth="1.300" />
        <path d="M21 78.500l3 3" stroke="#999" strokeWidth="1.800" />
        <path d="M12.500 91.500h5L15 94.500z" fill="#888" />
        <circle cx="26" cy="108.500" r="3.500" fill="#ddd" stroke="#aaa" />
        <path d="M24 108.500h4" stroke="#999" />
      </svg>
    </div>
  );
}

function DocTabs() {
  return (
    <div className="flex h-5 items-stretch bg-[#cbcbcb] text-[#444]">
      <div className="flex w-[145px] items-center pt-px">
        <Icon className="ml-[5px]">
          <path d="M0.600 2.500h12l3 3v8H0.600z" stroke="#7d7d7d" fill="#dcdcdc" />
          <path d="M3 12V8h3v4zM3 5.500h8M8 12V8h3v4M11 5v3" stroke="#8a8a8a" />
        </Icon>
        <span className="ml-[7px] tracking-[-0.200px] whitespace-nowrap">A001 - Title Sheet</span>
      </div>
      <div className="flex w-[128px] items-center bg-white pt-px">
        <PlanIcon className="ml-[5px]" />
        <span className="ml-[7px] w-[84px] text-[11.700px] font-bold tracking-[-0.400px] text-[#333]">Level 1</span>
        <Cross />
      </div>
      <div className="flex flex-1 items-center justify-end pr-1">
        <svg width="8" height="7" viewBox="0 0 8 7"><path d="M0 0h8v1.300H0zM0 3h8L4 7z" fill="#222" /></svg>
      </div>
    </div>
  );
}

const RedX = () => <path d="M9 8.500l6 6M15 8.500l-6 6" stroke="#b5201c" strokeWidth="2.400" />;

function ViewControls() {
  return (
    <div className="flex h-4 items-center bg-[#f0f0f0] pl-[24px]">
      <span className="w-[55px] leading-[14px] tracking-[-0.500px] text-black">1 : 100</span>
      <Icon><path d="M0.800 2h14.400v11H0.800z" fill="#fff" strokeWidth="1.600" /><path d="M4 3h4v4H4zM8 7h4v4H8zM12 3h2v4h-2zM2 7h2v4H2z" fill="#777" stroke="none" /></Icon>
      <Icon className="ml-[5px]"><path d="M1 7l4-4.500h10v6L11 13H1zM1 7h10v6M11 7l4-4.500" fill="#fff" /></Icon>
      <Icon className="ml-[4px]"><circle cx="7" cy="7" r="3.500" fill="#ffe9a6" stroke="#e0961b" /><path d="M7 0v2M0 7h2M2 2l1.500 1.500M12 2l-1.500 1.500M2 12l1.500-1.500" stroke="#e0961b" strokeWidth="1.500" /><RedX /></Icon>
      <Icon className="ml-[6px]"><circle cx="6" cy="6" r="4.500" fill="#bfe0f7" stroke="#3a7fc0" /><path d="M1 13.500h8" strokeWidth="2" /><RedX /></Icon>
      <Icon className="ml-[4px]"><path d="M4.500 13V4h11" stroke="#2a70b8" strokeWidth="2.600" /><path d="M0 11.500h3.500M7.500 13V7.500h6V13" stroke="#444" /><path d="M10 11V9.500h3" stroke="#d22" strokeWidth="1.800" /></Icon>
      <Icon className="ml-[5px]"><path d="M3.500 13V4h6" stroke="#2a70b8" strokeWidth="2.400" /><path d="M0 11.500h3M6.500 13V7.500h2.500" stroke="#444" /><path d="M8 11v-1.500h2" stroke="#d22" strokeWidth="1.800" /><circle cx="12.500" cy="6" r="2.800" fill="#d8ecfa" stroke="#2a70b8" /><path d="M12.500 9v5" stroke="#2a70b8" strokeWidth="2" /></Icon>
      <Icon className="ml-[5px]"><path d="M1 3.500l1.500 5M10 1.500h3l2.500 5" /><circle cx="5.500" cy="10" r="3" fill="#e6eef5" /><circle cx="12" cy="8.500" r="3" fill="#e6eef5" /></Icon>
      <Icon className="ml-[5px]"><circle cx="8" cy="6" r="3" fill="#bfe0f7" stroke="#2a70b8" /><path d="M8 9v4" stroke="#2a70b8" strokeWidth="2.200" /></Icon>
      <Icon className="ml-[5px]"><path d="M1.500 3.500h11M1.500 3.500v9H7M1.500 3v-1M5 3v-1M9 3v-1M12.500 2v4" stroke="#111" strokeWidth="1.600" /><circle cx="11" cy="10" r="3.500" stroke="#111" strokeDasharray="2 1" /><circle cx="11" cy="10" r="1" stroke="#111" /></Icon>
      <Icon className="ml-[5px]"><path d="M1 1v12M15 1v4M1 3h14" strokeWidth="1.200" /><path d="M1 10.500h8" strokeDasharray="2 1" /><path d="M9 8h6.500v5.500H9z" fill="#555" /><path d="M10.500 8V6h3.500v2" /></Icon>
      <Chevron dir="left" className="ml-[7px]" />
      <div className="ml-[686px] h-4 w-[17px] bg-[#cdcdcd]" />
      <Chevron dir="right" className="ml-[685px]" />
      <svg width="9" height="9" viewBox="0 0 9 9" className="mt-1 ml-[10px]"><path d="M6 0h2v2H6zM3 3h2v2H3zM6 3h2v2H6zM0 6h2v2H0zM3 6h2v2H3zM6 6h2v2H6z" fill="#c0c0c0" /></svg>
    </div>
  );
}

function ViewArea() {
  return (
    <div className="flex min-w-0 flex-1 flex-col border-l-2 border-[#c9c9c9]">
      <DocTabs />
      <div className="relative flex h-[925px] bg-white">
        <FloorPlan />
        <NavBar />
        <div className="mt-[2px] ml-px flex w-4 flex-col items-center bg-[#f0f0f0] pt-1">
          <Chevron dir="up" />
          <div className="mt-[439px] h-[17px] w-full bg-[#cdcdcd]" />
          <Chevron dir="down" className="mt-[438px]" />
        </div>
      </div>
      <div className="border-b-2 border-l-2 border-white">
        <ViewControls />
      </div>
    </div>
  );
}

/* ---------- status bar ---------- */

function Drop({ text, className }: { text: string; className: string }) {
  return (
    <div className={`flex h-[18px] shrink-0 items-center justify-between bg-white pr-[3px] pl-[3px] text-[#8a8a8a] ${className}`}>
      <span className="tracking-[-0.150px]">{text}</span>
      <svg width="9" height="6" viewBox="0 0 9 6"><path d="M0.500 0.800 4.500 4.800 8.500 0.800" fill="none" stroke="#9a9a9a" strokeWidth="1.200" /></svg>
    </div>
  );
}

const Pointer = () => <path d="M8.500 6.500v8l2-1.500 1.500 2.800 1.500-.8-1.500-2.500h2.500z" fill="#fff" stroke="#222" strokeWidth="0.900" />;

function StatusBar() {
  return (
    <div className="flex h-6 items-center bg-[#cbcbcb] text-black">
      <span className="w-[895px] shrink-0 pl-[2px] tracking-[-0.330px]">Click to select, TAB for alternates, CTRL adds, SHIFT unselects.</span>
      <Icon><path d="M1.500 7.500h6.500v6.500H1.500z" fill="#4ca5e0" stroke="#19669f" /><path d="M5 5V3l4-2 4 2v3.500L9.500 8z" fill="#a9dc9a" stroke="#2b7d21" /><path d="M10 8v7M14.500 6v9M13 6.500v2.500h3V6.500" strokeWidth="1.300" /></Icon>
      <Drop text="" className="ml-[9px] w-[204px]" />
      <Icon className="ml-[8px]"><path d="M5 2h9v4l-4 3H6zM6 9v5.500H3.500V12M7 5H2.500" fill="#b5b5b5" stroke="#8c8c8c" /></Icon>
      <span className="ml-[3px] w-[10px]">:0</span>
      <Icon className="ml-[25px]"><path d="M1 1.500h14v13H1z" fill="#eee" strokeWidth="1.600" /><path d="M1 3h14" strokeWidth="2.500" /><path d="M4 7h3M4.500 7v5h3M9 7h4M9 9.500h4M9 12h4" /></Icon>
      <Icon className="ml-[9px]"><path d="M0 0h16v16H0z" fill="#9b9b9b" stroke="none" /><path d="M3 13h4V8l3-5M10 3v3M8 13h5" stroke="#ccc" /></Icon>
      <Drop text="Main Model" className="ml-[9px] w-[204px]" />
      <Icon className="ml-[227px]"><circle cx="4" cy="4.500" r="2.500" stroke="#b37f0c" fill="#ffcf45" /><circle cx="11.500" cy="4.500" r="2.500" stroke="#b37f0c" fill="#ffcf45" /><path d="M4 4.500h8" stroke="#e0a520" strokeWidth="2" /><Pointer /></Icon>
      <Icon className="ml-[10px]"><path d="M1 12l4-7h6l-3 7z" fill="#d2ebfa" stroke="#2878b8" /><path d="M9 1l5 5M14 1l-5 5" stroke="#c22" strokeWidth="1.800" /><Pointer /></Icon>
      <Icon className="ml-[10px]"><path d="M2 2h8v3l-1 2 2 3H1l2-3-1-2z" fill="#f5a15a" stroke="#b1480f" /><path d="M6 10v4" /><Pointer /></Icon>
      <Icon className="ml-[10px]"><path d="M1 4l6-2v10l-6 2z" fill="#a7d8f7" stroke="#2878b8" /><path d="M9 1l5 5M14 1l-5 5" stroke="#c22" strokeWidth="1.800" /><Pointer /></Icon>
      <Icon className="ml-[10px]"><path d="M6 1v10M1 6h10M4.500 2.500 6 1l1.500 1.500M4.500 9.500 6 11M2.500 4.500 1 6l1.500 1.500M9.500 4.500 11 6" stroke="#111" /><Pointer /></Icon>
      <Icon className="ml-[10px]"><circle cx="8" cy="8" r="5" stroke="#999" strokeWidth="3" strokeDasharray="2.600 1.300" /></Icon>
      <Icon className="ml-[8px]"><path d="M1 2h14L9.500 8.500V15L6.500 13V8.500z" fill="#e6e9ee" stroke="#555d6b" /></Icon>
      <span className="ml-px">:0</span>
    </div>
  );
}

export default function App() {
  return (
    <div className="h-[1160px] w-[1920px] overflow-hidden bg-[#eeeeee] font-['Open_Sans','Noto_Sans',sans-serif] text-[12px] tracking-[-0.300px]">
      <TitleBar />
      <RibbonTabs />
      <Ribbon />
      <div className="h-[28px] border-b-2 border-[#c9c9c9] bg-[#eeeeee]" />
      <div className="flex h-[963px]">
        <div className="w-[199px] shrink-0 border-r-2 border-[#eeeeee]">
          <Properties />
          <div className="h-[2px] bg-[#c9c9c9]" />
          <ProjectBrowser />
        </div>
        <ViewArea />
      </div>
      <StatusBar />
    </div>
  );
}
